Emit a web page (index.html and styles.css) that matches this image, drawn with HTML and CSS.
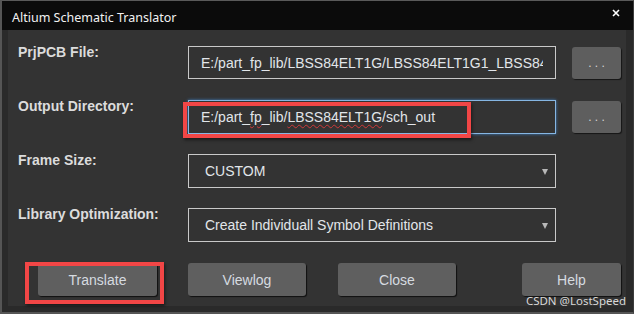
FILE: index.html
```html
<!DOCTYPE html>
<html lang="en">

<head>
  <meta charset="UTF-8" />
  <meta name="viewport" content="width=device-width, initial-scale=1.0" />
  <link rel="stylesheet" href="styles.css">
  <title>Altium Schematic Translator</title>
</head>

<body>
  <div class="window">
    <div class="titlebar">
      <span class="title">Altium Schematic Translator</span>
      <span class="close">
        <svg width="8" height="8" viewBox="0 0 8 8">
          <path d="M1 1L7 7M7 1L1 7" stroke="#fff" stroke-width="1.6" fill="none" />
        </svg>
      </span>
    </div>

    <div class="body">
      <div class="panel">
        <div class="form">
          <div class="label">PrjPCB File:</div>
          <div class="field prj">
            <span class="clip">E:/part_fp_lib/LBSS84ELT1G/LBSS84ELT1G1_LBSS84</span>
          </div>
          <button class="browse">. . .</button>

          <div class="label">Output Directory:</div>
          <div class="field-wrap">
            <div class="field focused">E:/part_<span class="typo">fp</span>_lib/<span class="typo">LBSS84ELT1G</span>/sch_out</div>
            <div class="mark mark-output"></div>
          </div>
          <button class="browse">. . .</button>

          <div class="label">Frame Size:</div>
          <div class="field select">
            <span class="value">CUSTOM</span>
            <span class="caret"></span>
          </div>
          <div></div>

          <div class="label">Library Optimization:</div>
          <div class="field select">
            <span class="value">Create Individuall Symbol Definitions</span>
            <span class="caret"></span>
          </div>
          <div></div>
        </div>

        <div class="actions">
          <div class="btn-wrap translate">
            <button class="btn">Translate</button>
            <div class="mark mark-translate"></div>
          </div>
          <button class="btn viewlog">Viewlog</button>
          <button class="btn close-btn">Close</button>
          <button class="btn help">Help</button>
        </div>
      </div>
    </div>

    <div class="watermark">CSDN @LostSpeed</div>
  </div>
</body>

</html>
```

FILE: styles.css
```css
*,
*::after,
*::before {
  box-sizing: border-box;
}

body {
  margin: 0;
  background-color: #2b2b2b;
  font-family: "Liberation Sans", Arial, sans-serif;
}

.window {
  position: relative;
  width: 634px;
  height: 314px;
  background-color: #2a2a2a;
  border-top: 1px solid #5a5a5a;
  border-left: 2px solid #555;
  border-bottom: 2px solid #555;
  border-right: 1px solid #3c3c3c;
  display: flex;
  flex-direction: column;
}

.titlebar {
  height: 29px;
  flex-shrink: 0;
  background-color: #0b0b0b;
  display: flex;
  align-items: flex-start;
  justify-content: space-between;
  padding: 0 13px 0 10px;
}

.title {
  font-family: "Noto Sans", sans-serif;
  font-size: 12.5px;
  color: #f2f2f2;
  margin-top: 8px;
}

.close {
  margin-top: 8px;
  display: flex;
}

.body {
  flex-grow: 1;
  padding: 0 7px 6px 6px;
  display: flex;
}

.panel {
  flex-grow: 1;
  background-color: #333;
  padding: 16px 0 0 10px;
}

.form {
  display: grid;
  grid-template-columns: 154px 368px 49px;
  grid-auto-rows: 34px;
  column-gap: 16px;
  row-gap: 20px;
}

.label {
  font-size: 14px;
  font-weight: bold;
  line-height: 14px;
  color: #dcdcdc;
  margin-top: -1px;
}

.field {
  min-width: 0;
  height: 34px;
  border: 1px solid #c9c9c9;
  display: flex;
  align-items: center;
  padding: 0 12px;
  font-size: 14px;
  color: #e2e6ea;
  white-space: nowrap;
  overflow: hidden;
}

.field.prj {
  height: 33px;
}

.clip {
  display: block;
  width: 342px;
  overflow: hidden;
}

.field-wrap {
  position: relative;
}

.field.focused {
  border-color: #86b6e3;
  box-shadow: 0 0 3px #3f7fbf;
}

.typo {
  text-decoration: underline wavy #d03a3a;
  text-decoration-thickness: 1px;
  text-underline-offset: 2px;
}

.select {
  padding: 0 7px 0 16px;
  justify-content: space-between;
}

.caret {
  width: 0;
  height: 0;
  border-left: 3px solid transparent;
  border-right: 3px solid transparent;
  border-top: 6px solid #b8b8b8;
  margin-top: 1px;
}

.browse {
  align-self: start;
  margin-top: 1px;
  height: 32px;
  padding: 0;
  border: none;
  border-radius: 3px;
  background-color: #5e5e5e;
  box-shadow: 1px 1px 1px #161616;
  color: #d4d4d4;
  font-family: "Liberation Sans", Arial, sans-serif;
  font-size: 12px;
}

.actions {
  display: flex;
  margin-top: 21px;
  padding-left: 20px;
}

.btn {
  height: 33px;
  width: 118px;
  padding: 0;
  border: none;
  border-radius: 3px;
  background-color: #5f5f5f;
  box-shadow: 1px 1px 1px #101010;
  color: #d6dbe0;
  font-family: "Liberation Sans", Arial, sans-serif;
  font-size: 14px;
}

.btn-wrap {
  position: relative;
  display: flex;
}

.translate .btn {
  width: 119px;
}

.viewlog {
  margin-left: 31px;
}

.close-btn {
  margin-left: 32px;
}

.help {
  margin-left: 66px;
  width: 99px;
}

.mark {
  position: absolute;
  border: 4px solid #f24646;
  box-shadow: 1px 2px 3px rgba(0, 0, 0, 0.5);
  pointer-events: none;
}

.mark-output {
  left: -5px;
  top: 2px;
  width: 288px;
  height: 36px;
}

.mark-translate {
  left: -13px;
  top: -1px;
  width: 139px;
  height: 42px;
}

.watermark {
  position: absolute;
  right: 7px;
  bottom: 5px;
  font-family: "Noto Sans", sans-serif;
  font-size: 11.5px;
  line-height: 13px;
  color: #d8d8d8;
}
```
